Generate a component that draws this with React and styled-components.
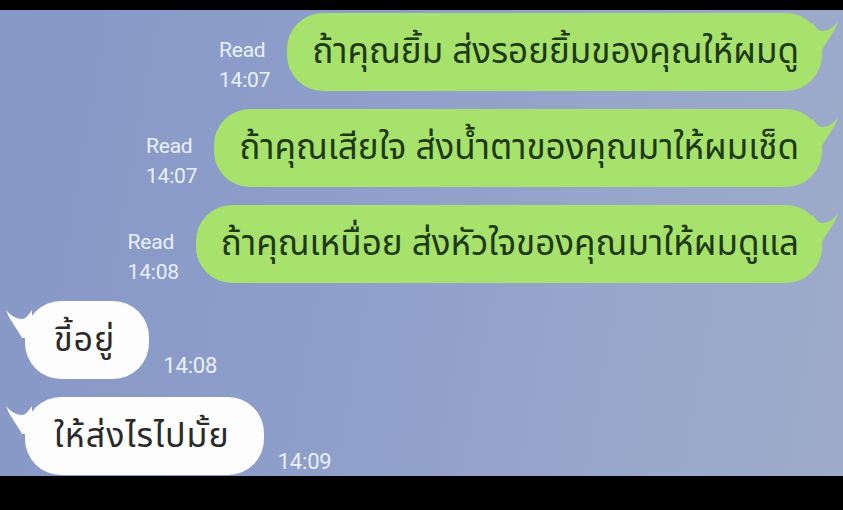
import React from "react";
import styled, { createGlobalStyle, css } from "styled-components";

const GlobalStyle = createGlobalStyle`
  html, body { margin: 0; padding: 0; background: #000; }
  body { font-family: "Noto Sans Thai", "Noto Sans", "DejaVu Sans", sans-serif; }
  * { box-sizing: border-box; }
`;

const Screen = styled.div`
  width: 843px;
  height: 510px;
  background: #000;
  display: flex;
  flex-direction: column;
  padding: 10px 0 34px;
`;

const Chat = styled.div`
  flex: 1;
  background: linear-gradient(100deg, #8898c7 0%, #8e9fca 45%, #98a7cb 75%, #9eabca 100%);
  display: flex;
  flex-direction: column;
  gap: 18px;
  padding: 3px 21px 0 25px;
  overflow: hidden;
`;

const Row = styled.div`
  display: flex;
  align-items: flex-end;
  justify-content: ${(p) => (p.$mine ? "flex-end" : "flex-start")};
  gap: ${(p) => (p.$mine ? "17px" : "14px")};
`;

const Meta = styled.div`
  display: flex;
  flex-direction: column;
  align-items: flex-start;
  font-family: Roboto, "Liberation Sans", sans-serif;
  font-size: ${(p) => (p.$mine ? "21px" : "22px")};
  line-height: 30px;
  color: #eaf0fa;
  margin-bottom: ${(p) => (p.$mine ? "-4px" : "-2px")};
  letter-spacing: -0.2px;
`;

const Bubble = styled.div`
  position: relative;
  height: 78px;
  display: flex;
  align-items: center;
  border-radius: 36px;
  white-space: nowrap;
  ${(p) =>
    p.$mine
      ? css`
          background: #a7e26c;
          color: #1e3914;
          padding: 0 23px 0 25px;
          font-size: 35px;
        `
      : css`
          background: #fdfdfd;
          color: #2a2a2a;
          padding: 0 34px 0 29px;
          font-size: 34px;
          letter-spacing: 1px;
        `}
`;

const Text = styled.span`
  position: relative;
  z-index: 1;
`;

const TailSvg = styled.svg`
  position: absolute;
  top: 0;
  width: 30px;
  height: 40px;
  ${(p) =>
    p.$mine
      ? css`
          right: -20px;
        `
      : css`
          left: -23px;
          transform: scaleX(-1);
        `}
`;

function Tail({ mine }) {
  return (
    <TailSvg $mine={mine} viewBox="0 0 30 40" aria-hidden="true">
      <path
        d="M0 9 C4 15 7 18 10 18 C16 18 22 14 26 9 C23 18 16 26 10 37 L0 37 Z"
        fill={mine ? "#a7e26c" : "#fdfdfd"}
      />
    </TailSvg>
  );
}

const messages = [
  { mine: true, text: "ถ้าคุณยิ้ม ส่งรอยยิ้มของคุณให้ผมดู", time: "14:07" },
  { mine: true, text: "ถ้าคุณเสียใจ ส่งน้ำตาของคุณมาให้ผมเช็ด", time: "14:07" },
  { mine: true, text: "ถ้าคุณเหนื่อย ส่งหัวใจของคุณมาให้ผมดูแล", time: "14:08" },
  { mine: false, text: "ขี้อยู่", time: "14:08" },
  { mine: false, text: "ให้ส่งไรไปมั้ย", time: "14:09" },
];

export default function App() {
  return (
    <>
      <GlobalStyle />
      <Screen>
        <Chat>
          {messages.map((m, i) =>
            m.mine ? (
              <Row key={i} $mine>
                <Meta $mine>
                  <span>Read</span>
                  <span>{m.time}</span>
                </Meta>
                <Bubble $mine>
                  <Tail mine />
                  <Text>{m.text}</Text>
                </Bubble>
              </Row>
            ) : (
              <Row key={i}>
                <Bubble>
                  <Tail />
                  <Text>{m.text}</Text>
                </Bubble>
                <Meta>
                  <span>{m.time}</span>
                </Meta>
              </Row>
            )
          )}
        </Chat>
      </Screen>
    </>
  );
}
